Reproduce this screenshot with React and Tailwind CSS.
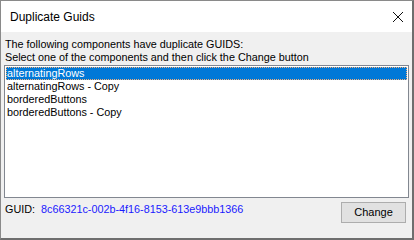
import React from 'react'

const rows = ['alternatingRows', 'alternatingRows - Copy', 'borderedButtons', 'borderedButtons - Copy']

export default function App() {
    const selected = 0

    return (
        <div className="w-[414px] h-[240px] flex flex-col bg-[#f0f0f0] border border-[#8a8a8a] border-r-2 border-b-2 border-r-[#6e6e6e] border-b-[#6e6e6e] overflow-hidden" style={{ fontFamily: '"Liberation Sans", Arial, sans-serif' }}>
            <div className="h-[31px] shrink-0 bg-white flex items-center justify-between pl-[9px] pr-[8px]">
                <span className="text-[12px] text-black">Duplicate Guids</span>
                <svg width="12" height="12" viewBox="0 0 12 12">
                    <path d="M1 1 L11 11 M11 1 L1 11" stroke="#111" strokeWidth="1" />
                </svg>
            </div>
            <div className="flex flex-col px-[3px] pt-[6px] text-[10.8px] leading-[13px] text-black">
                <p className="pl-[1px]">The following components have duplicate GUIDS:</p>
                <p className="pl-[1px]">Select one of the components and then click the Change button</p>
                <div className="mt-[1px] h-[133px] bg-white border border-[#828790] p-[1px]">
                    {rows.map((r, i) => (
                        <div
                            key={r}
                            className={i === selected
                                ? 'h-[13px] leading-[13px] pl-[1px] bg-[#0078d7] text-white outline outline-1 outline-dotted outline-[#f5b07a] -outline-offset-1'
                                : 'h-[13px] leading-[13px] pl-[1px]'}
                        >
                            {r}
                        </div>
                    ))}
                </div>
                <div className="flex items-start justify-between mt-[4px]">
                    <div className="flex gap-[6px] pl-[1px] pt-[1px]">
                        <span>GUID:</span>
                        <span className="text-[#1a1aff]">8c66321c-002b-4f16-8153-613e9bbb1366</span>
                    </div>
                    <button className="w-[65px] h-[21px] mr-[3px] bg-[#e1e1e1] border border-[#adadad] text-[11px] text-black">Change</button>
                </div>
            </div>
        </div>
    )
}
